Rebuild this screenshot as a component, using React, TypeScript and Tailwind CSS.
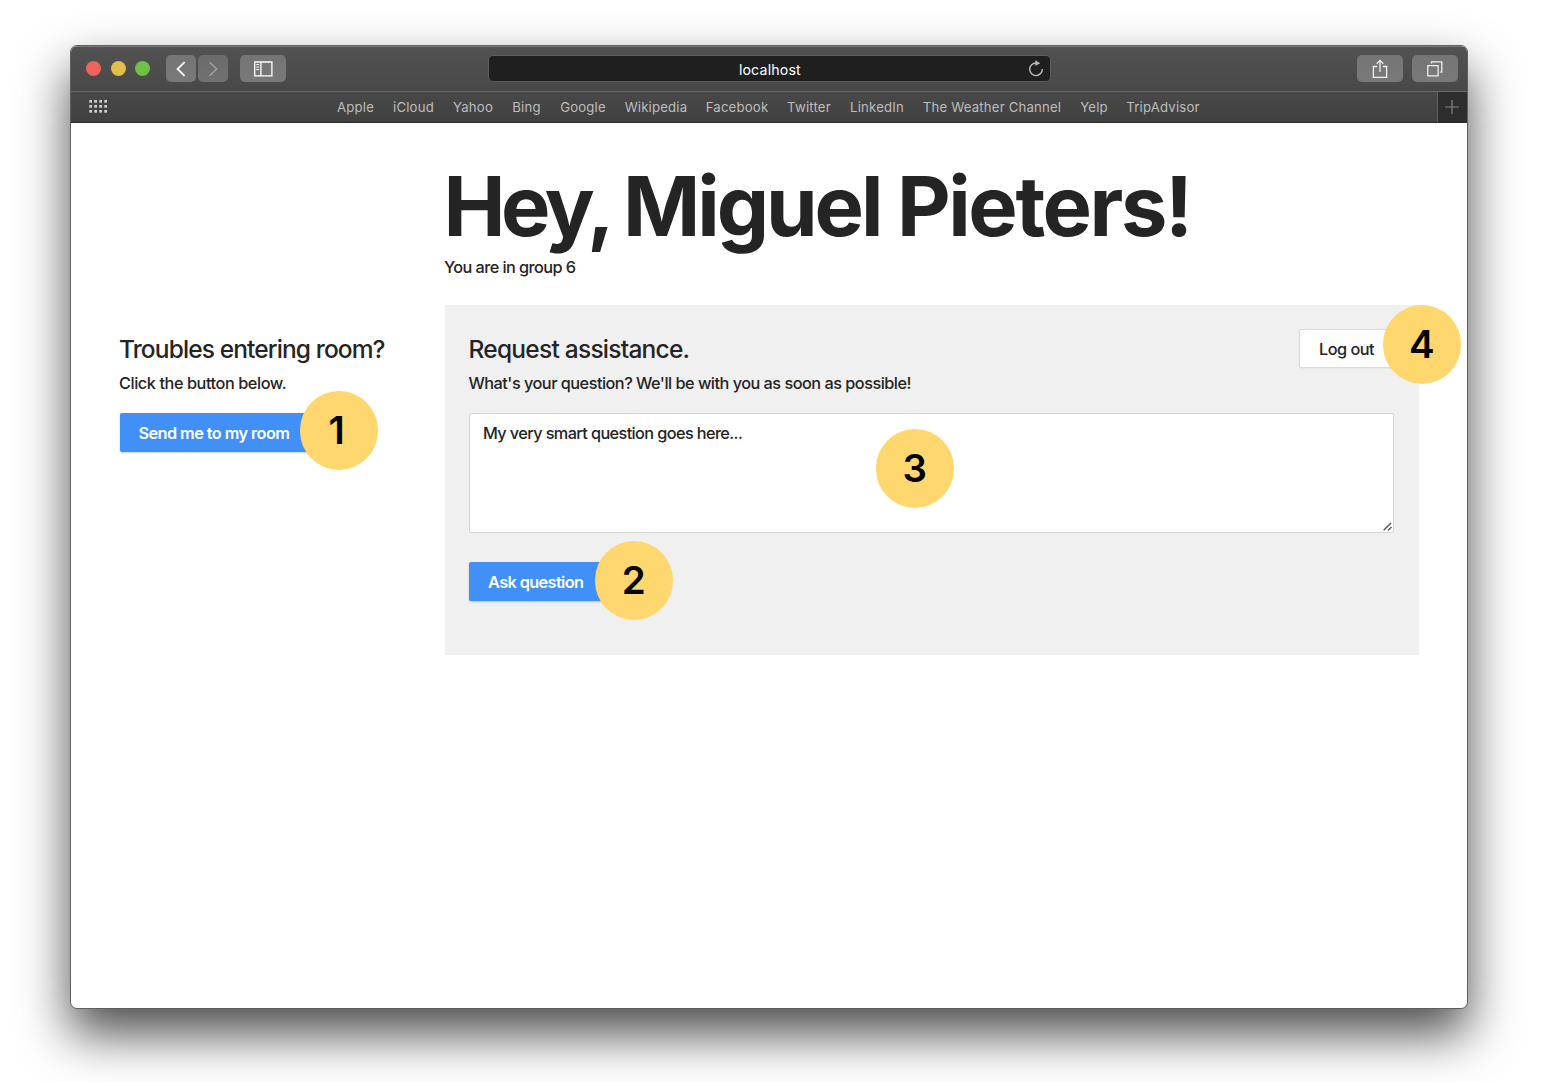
import React from "react";

const bookmarks = [
  "Apple", "iCloud", "Yahoo", "Bing", "Google", "Wikipedia", "Facebook",
  "Twitter", "LinkedIn", "The Weather Channel", "Yelp", "TripAdvisor",
];

function Badge({ n, className }: { n: string; className: string }) {
  return (
    <div className={`absolute flex size-[78.5px] items-center justify-center rounded-full bg-[#fed76f] text-[38.5px] leading-none font-semibold text-black ${className}`}>
      <span>{n}</span>
    </div>
  );
}

function Toolbar() {
  return (
    <div className="flex h-[46px] items-center border-t border-[#7b7b7b] border-b border-b-[#6a6a6a] bg-linear-to-b from-[#525252] to-[#484848] pb-px pl-[15.4px] pr-[9.5px]">
      <div className="flex gap-[9.5px]">
        <span className="size-[15px] rounded-full bg-[#ee6459]" />
        <span className="size-[15px] rounded-full bg-[#e0bf4b]" />
        <span className="size-[15px] rounded-full bg-[#6fc144]" />
      </div>
      <div className="ml-[15.6px] flex gap-[2px]">
        <div className="flex h-[27px] w-[30px] items-center justify-center rounded-[5px] bg-linear-to-b from-[#757575] to-[#797979]">
          <svg width="12" height="16" viewBox="0 0 12 16" fill="none" stroke="#fff" strokeWidth="1.8"><path d="M9.6 1.2 2.6 8l7 6.8" /></svg>
        </div>
        <div className="flex h-[27px] w-[30px] items-center justify-center rounded-[5px] bg-linear-to-b from-[#6b6b6b] to-[#717171]">
          <svg width="12" height="16" viewBox="0 0 12 16" fill="none" stroke="#a0a0a0" strokeWidth="1.6"><path d="m2.6 1.2 7 6.8-7 6.8" /></svg>
        </div>
      </div>
      <div className="ml-[12.2px] flex h-[27px] w-[46px] items-center justify-center rounded-[5px] bg-linear-to-b from-[#757575] to-[#797979]">
        <svg width="19" height="16" viewBox="0 0 19 16" fill="none" stroke="#fff" strokeWidth="1.3"><path d="M.7 1h17.2v13.8H.7zM6.9 1v13.8" /><path d="M2.2 3.6h3M2.2 6.1h3M2.2 8.6h3" strokeWidth="1" /></svg>
      </div>
      <div className="relative ml-[201.6px] flex h-[27px] w-[563px] items-center justify-center rounded-[5px] border border-[#5c5c5c] bg-[#1f1f1f] text-[14.2px] tracking-[0.15px] text-white">
        <span className="relative top-px left-[0.6px]">localhost</span>
        <svg className="absolute top-[4px] right-[6px]" width="16" height="18" viewBox="0 0 16 18" fill="none" stroke="#b9b9b9" strokeWidth="1.4"><path d="M8.2 3A6.3 6.3 0 1 0 14.3 9" /><path d="M7.4.2v5.9l4.8-2.9z" fill="#b9b9b9" stroke="none" /></svg>
      </div>
      <div className="ml-auto flex gap-[9px]">
        <div className="flex h-[27px] w-[46px] items-center justify-center rounded-[5px] bg-linear-to-b from-[#757575] to-[#797979]">
          <svg width="16" height="20" viewBox="0 0 16 20" fill="none" stroke="#eee" strokeWidth="1.3"><path d="M5.2 7.5H1.4v10.8h13.2V7.5h-3.8M8 13V1.4M4.7 4.7 8 1.4l3.3 3.3" /></svg>
        </div>
        <div className="flex h-[27px] w-[46px] items-center justify-center rounded-[5px] bg-linear-to-b from-[#757575] to-[#797979]">
          <svg width="16" height="16" viewBox="0 0 16 16" fill="none" stroke="#eee" strokeWidth="1.3"><path d="M.8 4.7h10.3v10.2H.8zM4.5 2.6V.9h10.3v10.3h-1.6" /></svg>
        </div>
      </div>
    </div>
  );
}

function BookmarksBar() {
  return (
    <div className="flex h-[31px] items-stretch border-b border-[#2b2b2b] bg-linear-to-b from-[#484848] to-[#404040]">
      <div className="flex w-[266px] items-center pl-[18px] pb-px">
        <svg width="19" height="13" viewBox="0 0 19 13" fill="#cfcfcf">
          {[0, 5, 10].map((y) => [0, 5, 10, 15].map((x) => <rect key={`${x}-${y}`} x={x + 0.3} y={y} width="2.7" height="2.7" />))}
        </svg>
      </div>
      <div className="grid grid-cols-[37px_41px_40px_29px_46px_62px_62px_44px_54px_138px_28px_72px] items-center gap-x-[19px] pt-px text-[13.2px] tracking-[0.18px] whitespace-nowrap text-[#bdbdbd]">
        {bookmarks.map((b) => <span key={b} className="flex justify-center">{b}</span>)}
      </div>
      <div className="ml-auto flex w-[30px] items-center justify-center border-l border-[#5e5e5e] bg-[#2d2d2d] pr-px">
        <svg width="14" height="14" viewBox="0 0 14 14" stroke="#858585" strokeWidth="1.2"><path d="M7 0v14M0 7h14" /></svg>
      </div>
    </div>
  );
}

export default function App() {
  return (
    <div className="h-[1082px] w-[1556px] overflow-hidden bg-white pt-[45px] pl-[70px] font-['Inter',sans-serif]">
      <div className="h-[964px] w-[1398px] rounded-[7px] border border-[#5f5f5f] bg-white shadow-[0_25px_50px_rgba(0,0,0,0.7)]">
        <div className="overflow-hidden rounded-t-[6px]">
          <Toolbar />
          <BookmarksBar />
        </div>
        <main className="grid grid-cols-[325px_974px] pl-[48.5px] text-[16.3px] font-medium text-[#242424]">
          <header className="col-start-2 h-[182px] pt-[33px]">
            <h1 className="-ml-px h-[99px] text-[83px] leading-[100px] font-bold whitespace-nowrap">
              <span className="tracking-[-4.4px]">Hey, </span>
              <span className="tracking-[-3.1px]">Miguel </span>
              <span className="tracking-[-2.4px]">Pieters!</span>
            </h1>
            <p className="-ml-[0.5px] leading-6 tracking-[-0.57px]">You are in group 6</p>
          </header>
          <aside className="relative col-start-1 pt-[29px]">
            <h2 className="-ml-[0.5px] text-[24.5px] leading-[30px] tracking-[-0.88px] whitespace-nowrap">Troubles entering room?</h2>
            <p className="mt-[7px] -ml-[0.5px] leading-6 tracking-[-0.43px]">Click the button below.</p>
            <button className="mt-[18px] h-[39px] w-[210px] rounded-[2px] bg-[#4090f7] pt-px pl-[19px] text-left font-semibold tracking-[-0.57px] text-white shadow-[0_1px_2px_rgba(0,0,0,0.2)]">Send me to my room</button>
            <Badge n="1" className="top-[86px] left-[180px] pr-[4px]" />
          </aside>
          <section className="relative h-[350px] bg-[#f0f0f0] px-[24.5px] pt-[24px]">
            <div className="flex justify-between">
              <div className="pt-[5px]">
                <h2 className="-ml-[0.5px] text-[24.5px] leading-[30px] tracking-[-0.75px]">Request assistance.</h2>
                <p className="mt-[7px] -ml-[0.5px] leading-6 tracking-[-0.51px]">What's your question? We'll be with you as soon as possible!</p>
              </div>
              <button className="h-[39px] w-[95px] rounded-[2px] border border-[#dadada] bg-white pt-px tracking-[-0.52px] shadow-[0_1px_1px_rgba(0,0,0,0.04)]">Log out</button>
            </div>
            <div className="relative mt-[18px] h-[120px] rounded-[2px] border border-[#d5d5d5] bg-white px-[13px] pt-[7px] leading-6 tracking-[-0.61px]">
              My very smart question goes here...
              <svg className="absolute right-[1px] bottom-[1px]" width="9" height="9" viewBox="0 0 9 9" stroke="#555" strokeWidth="1.4"><path d="M.7 8.3 8 1M5 8.5l3.5-3.5" /></svg>
            </div>
            <button className="mt-[29px] h-[39px] w-[150px] rounded-[2px] bg-[#4090f7] pt-px pl-[19px] text-left font-semibold tracking-[-0.6px] text-white shadow-[0_1px_2px_rgba(0,0,0,0.2)]">Ask question</button>
            <Badge n="2" className="top-[236px] left-[150px]" />
            <Badge n="3" className="top-[124px] left-[431px]" />
            <Badge n="4" className="top-0 left-[938px]" />
          </section>
        </main>
      </div>
    </div>
  );
}
